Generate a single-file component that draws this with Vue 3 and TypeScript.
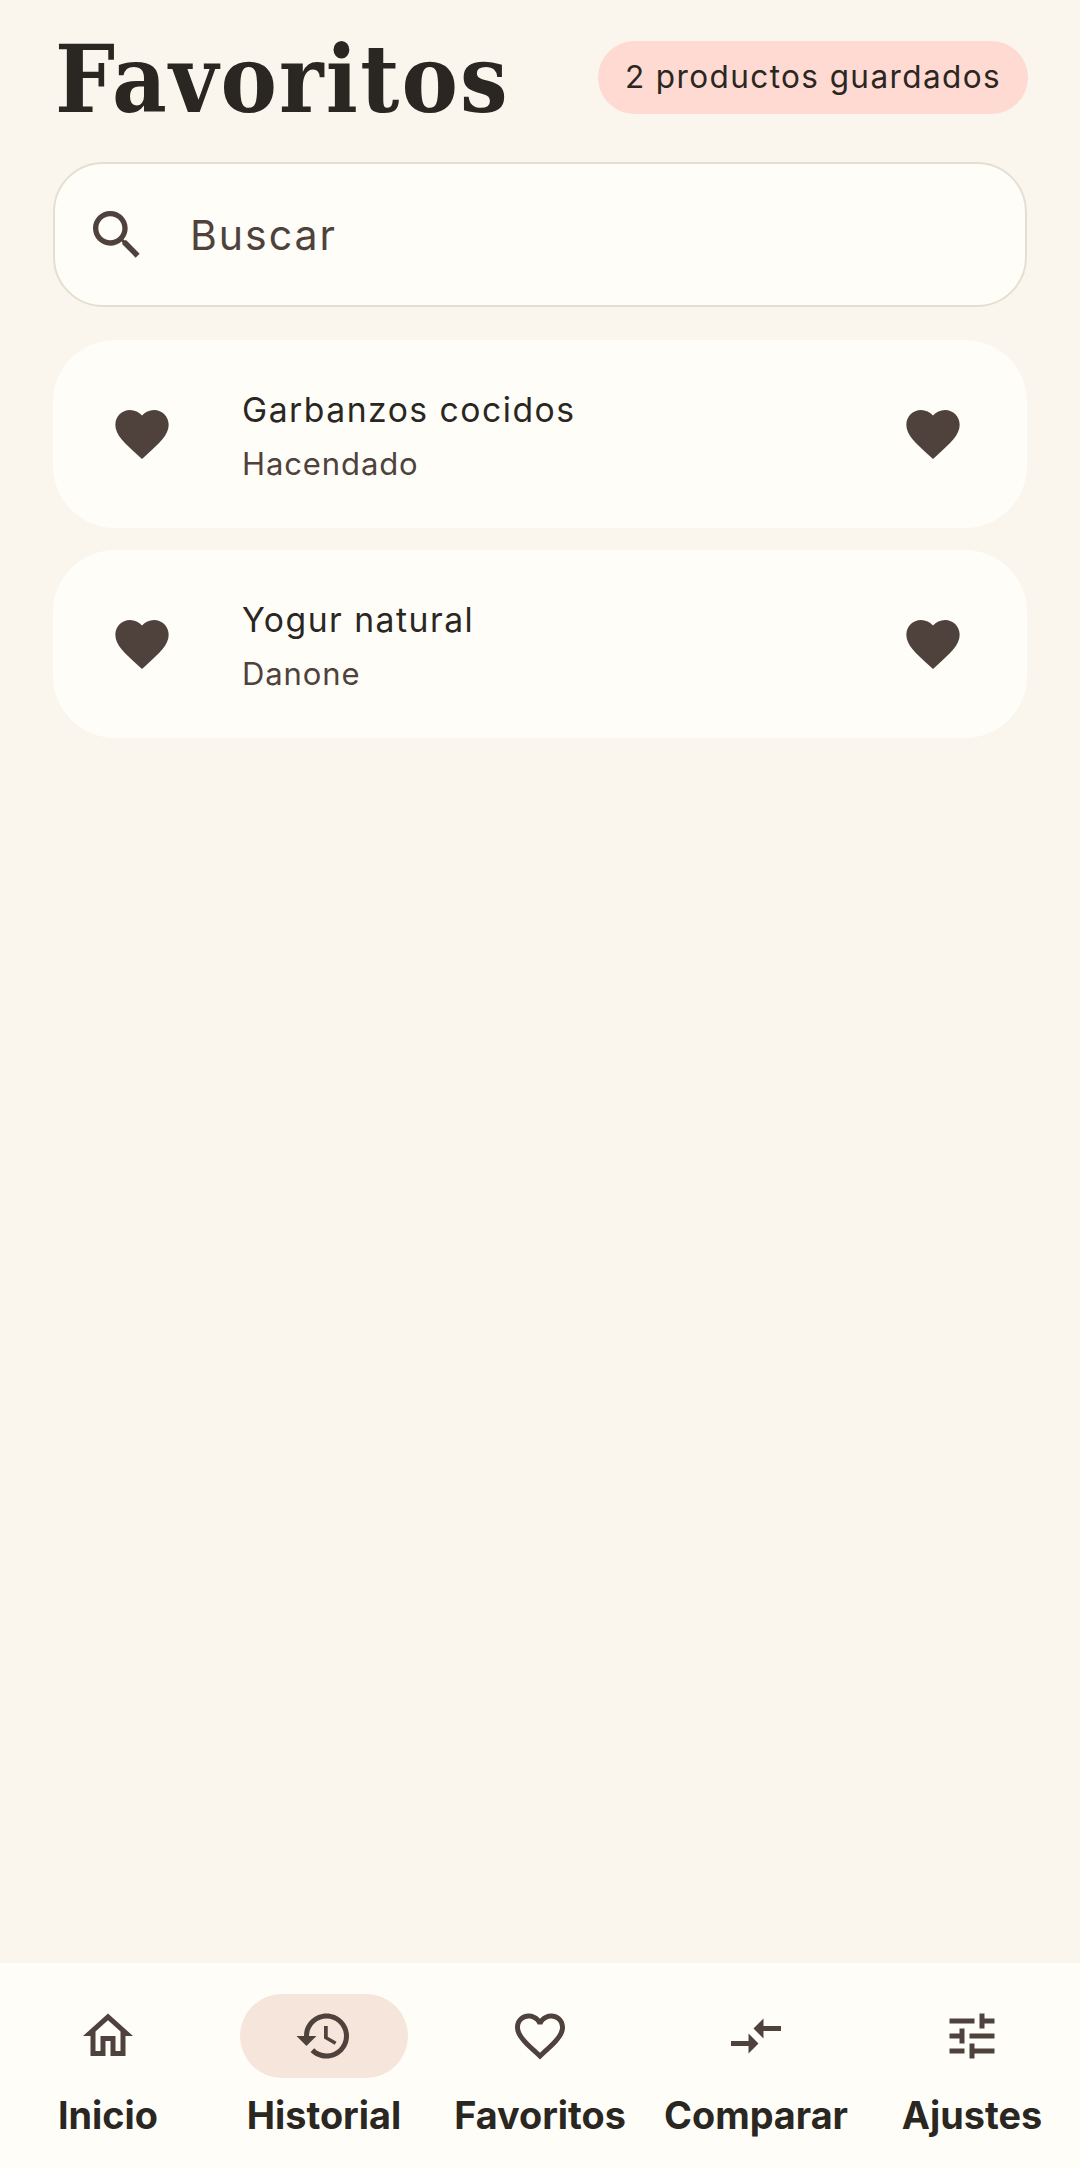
<template>
  <div class="page">
    <header class="top">
      <h1>Favoritos</h1>
      <span class="badge">2 productos guardados</span>
    </header>

    <div class="search">
      <svg class="search-icon" viewBox="0 0 24 24"><path :d="icons.search" /></svg>
      <span>Buscar</span>
    </div>

    <div class="list">
      <div v-for="item in items" :key="item.name" class="card">
        <svg class="heart" viewBox="0 0 24 24"><path :d="icons.heart" /></svg>
        <div class="info">
          <div class="name">{{ item.name }}</div>
          <div class="brand">{{ item.brand }}</div>
        </div>
        <svg class="heart" viewBox="0 0 24 24"><path :d="icons.heart" /></svg>
      </div>
    </div>

    <nav class="nav">
      <div v-for="tab in tabs" :key="tab.label" class="tab">
        <div class="pill" :class="{ active: tab.active }">
          <svg viewBox="0 0 24 24"><path :d="tab.icon" /></svg>
        </div>
        <span>{{ tab.label }}</span>
      </div>
    </nav>
  </div>
</template>

<script setup lang="ts">
const icons = {
  search:
    'M15.5 14h-.79l-.28-.27C15.41 12.59 16 11.11 16 9.5 16 5.91 13.09 3 9.5 3S3 5.91 3 9.5 5.91 16 9.5 16c1.61 0 3.09-.59 4.23-1.57l.27.28v.79l5 4.99L20.49 19l-4.99-5zm-6 0C7.01 14 5 11.99 5 9.5S7.01 5 9.5 5 14 7.01 14 9.5 11.99 14 9.5 14z',
  heart:
    'M12 21.35l-1.45-1.32C5.4 15.36 2 12.28 2 8.5 2 5.42 4.42 3 7.5 3c1.74 0 3.41.81 4.5 2.09C13.09 3.81 14.76 3 16.5 3 19.58 3 22 5.42 22 8.5c0 3.78-3.4 6.86-8.55 11.54L12 21.35z',
  home: 'M12 5.69l5 4.5V18h-2v-6H9v6H7v-7.81l5-4.5M12 3L2 12h3v8h6v-6h2v6h6v-8h3L12 3z',
  history:
    'M13 3c-4.97 0-9 4.03-9 9H1l3.89 3.89.07.14L9 12H6c0-3.87 3.13-7 7-7s7 3.13 7 7-3.13 7-7 7c-1.93 0-3.68-.79-4.94-2.06l-1.42 1.42C8.27 19.99 10.51 21 13 21c4.97 0 9-4.03 9-9s-4.03-9-9-9zm-1 5v5l4.28 2.54.72-1.21-3.5-2.08V8H12z',
  favorite:
    'M16.5 3c-1.74 0-3.41.81-4.5 2.09C10.91 3.81 9.24 3 7.5 3 4.42 3 2 5.42 2 8.5c0 3.78 3.4 6.86 8.55 11.54L12 21.35l1.45-1.32C18.6 15.36 22 12.28 22 8.5 22 5.42 19.58 3 16.5 3zm-4.4 15.55l-.1.1-.1-.1C7.14 14.24 4 11.39 4 8.5 4 6.5 5.5 5 7.5 5c1.54 0 3.04.99 3.57 2.36h1.87C13.46 5.99 14.96 5 16.5 5c2 0 3.5 1.5 3.5 3.5 0 2.89-3.14 5.74-7.9 10.05z',
  compare: 'M9.01 14H2v2h7.01v3L13 15l-3.99-4v3zm5.98-1v-3H22V8h-7.01V5L11 9l3.99 4z',
  tune: 'M3 17v2h6v-2H3zM3 5v2h10V5H3zm10 16v-2h8v-2h-8v-2h-2v6h2zM7 9v2H3v2h4v2h2V9H7zm14 4v-2H11v2h10zm-6-4h2V7h4V5h-4V3h-2v6z',
}

const items = [
  { name: 'Garbanzos cocidos', brand: 'Hacendado' },
  { name: 'Yogur natural', brand: 'Danone' },
]

const tabs = [
  { label: 'Inicio', icon: icons.home, active: false },
  { label: 'Historial', icon: icons.history, active: true },
  { label: 'Favoritos', icon: icons.favorite, active: false },
  { label: 'Comparar', icon: icons.compare, active: false },
  { label: 'Ajustes', icon: icons.tune, active: false },
]
</script>

<style>
html,
body {
  margin: 0;
  background: #faf6ed;
}
</style>

<style scoped>
.page {
  width: 1080px;
  height: 2168px;
  display: flex;
  flex-direction: column;
  background: #faf6ed;
  font-family: Inter, 'Noto Sans', sans-serif;
  color: #2a2722;
}

.top {
  display: flex;
  align-items: center;
  justify-content: space-between;
  height: 162px;
  padding: 0 52px 0 55px;
  box-sizing: border-box;
}

h1 {
  margin: 0 0 5px;
  font-family: 'DejaVu Serif', serif;
  font-stretch: condensed;
  font-size: 94px;
  font-weight: 700;
  letter-spacing: 2.2px;
  line-height: 1;
}

.badge {
  height: 73px;
  margin-bottom: 8px;
  padding: 0 27px 2px;
  display: flex;
  align-items: center;
  box-sizing: border-box;
  border-radius: 37px;
  background: #ffdad2;
  font-size: 31.5px;
  letter-spacing: 1.4px;
}

.search {
  height: 145px;
  margin: 0 53px;
  padding: 0 0 0 30px;
  display: flex;
  align-items: center;
  gap: 41px;
  box-sizing: border-box;
  background: #fffdf8;
  border: 2px solid #e4dfd0;
  border-radius: 50px;
  font-size: 41px;
  letter-spacing: 2px;
  color: #4f423c;
}

.search-icon {
  width: 64px;
  height: 64px;
  fill: #4f423c;
}

.list {
  margin: 33px 53px 0;
  display: flex;
  flex-direction: column;
  gap: 22px;
  flex: 1;
}

.card {
  height: 188px;
  padding: 0 62px 0 57px;
  display: flex;
  align-items: center;
  box-sizing: border-box;
  background: #fffdf8;
  border-radius: 62px;
}

.heart {
  width: 64px;
  height: 64px;
  fill: #4f423c;
  flex: none;
}

.info {
  flex: 1;
  margin-left: 68px;
  padding-top: 4px;
}

.name {
  font-size: 33.7px;
  line-height: 44px;
  letter-spacing: 1.5px;
}

.brand {
  margin-top: 12px;
  font-size: 31px;
  line-height: 40px;
  letter-spacing: 0.9px;
  color: #4f423c;
}

.nav {
  height: 205px;
  display: grid;
  grid-template-columns: repeat(5, 216px);
  background: #fffdf8;
}

.tab {
  display: flex;
  flex-direction: column;
  align-items: center;
  padding-top: 31px;
  font-size: 37.8px;
  font-weight: 700;
  white-space: nowrap;
}

.pill {
  width: 168px;
  height: 84px;
  display: flex;
  align-items: center;
  justify-content: center;
  border-radius: 42px;
}

.pill.active {
  background: #f5e5da;
}

.pill svg {
  width: 60px;
  height: 60px;
  fill: #4f423c;
}

.tab span {
  margin-top: 15px;
  line-height: 44px;
}
</style>
